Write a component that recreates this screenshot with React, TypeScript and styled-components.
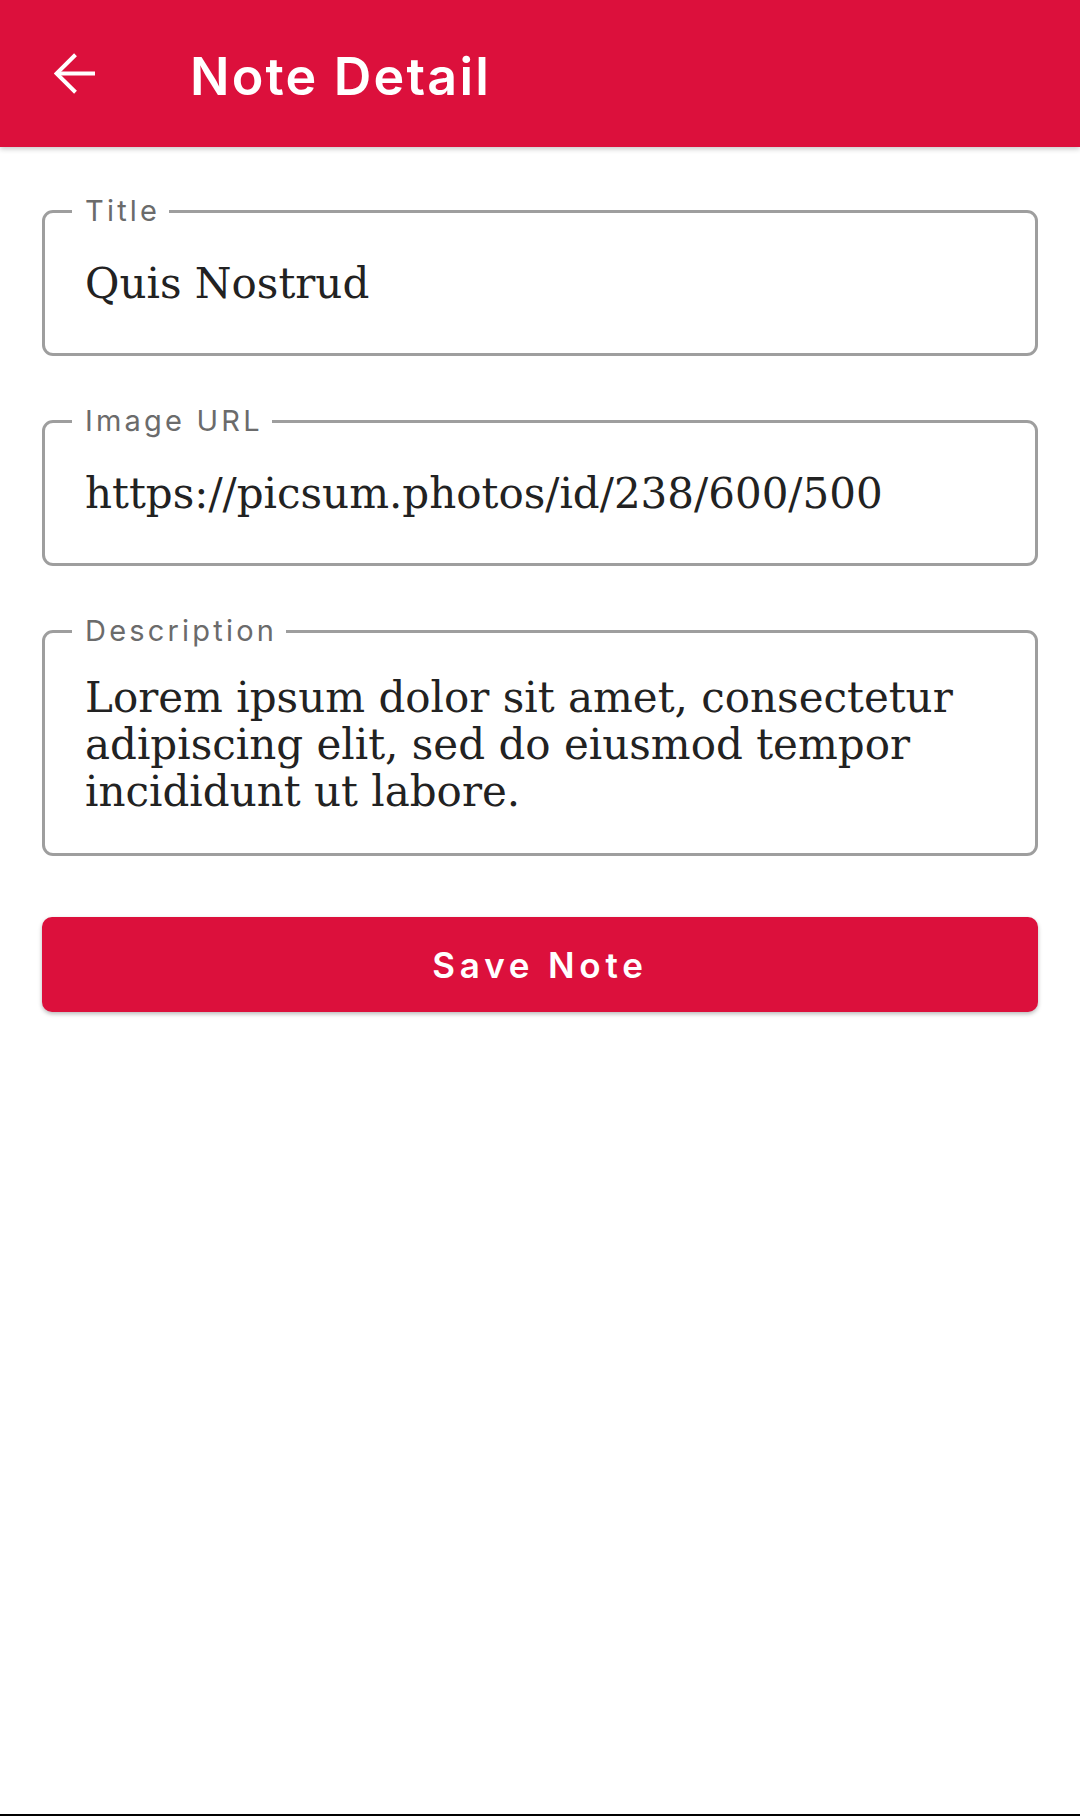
import React from "react";
import styled, { createGlobalStyle } from "styled-components";

const GlobalStyle = createGlobalStyle`
  html, body {
    margin: 0;
    padding: 0;
    background: #ffffff;
  }
  * { box-sizing: border-box; }
`;

const Screen = styled.div`
  height: 100vh;
  display: flex;
  flex-direction: column;
  border-bottom: 2px solid #000000;
  background: #ffffff;
`;

const AppBar = styled.header`
  position: relative;
  z-index: 1;
  height: 147px;
  flex: 0 0 auto;
  display: flex;
  align-items: center;
  padding-left: 54px;
  gap: 95px;
  background: #dc103c;
  box-shadow: 0 2px 5px rgba(0, 0, 0, 0.22);
`;

const BackButton = styled.button`
  width: 41px;
  height: 41px;
  padding: 0;
  border: none;
  background: transparent;
  display: flex;
  align-items: center;
  justify-content: center;
  cursor: pointer;
`;

const AppTitle = styled.h1`
  margin: 0;
  margin-top: 6px;
  font-family: Inter, "Noto Sans", sans-serif;
  font-weight: 600;
  font-size: 52px;
  color: #ffffff;
  letter-spacing: 2.2px;
`;

const Form = styled.main`
  display: flex;
  flex-direction: column;
  padding: 63px 42px 0 42px;
`;

const Fields = styled.div`
  display: flex;
  flex-direction: column;
  gap: 64px;
`;

const Field = styled.div<{ $multiline?: boolean }>`
  position: relative;
  height: ${(p) => (p.$multiline ? 226 : 146)}px;
  border: 3px solid #9e9e9e;
  border-radius: 11px;
  display: flex;
  align-items: ${(p) => (p.$multiline ? "flex-start" : "center")};
  padding: ${(p) => (p.$multiline ? "41px 40px 0 40px" : "0 40px 0 40px")};
`;

const FieldLabel = styled.span`
  position: absolute;
  top: -17px;
  left: 27px;
  padding: 0 9px 0 13px;
  background: #ffffff;
  font-family: Inter, "Noto Sans", sans-serif;
  font-size: 29px;
  line-height: 29px;
  color: #6b6b6b;
  letter-spacing: 3.2px;
`;

const FieldValue = styled.div<{ $multiline?: boolean }>`
  font-family: "DejaVu Serif", "Liberation Serif", serif;
  font-size: 42px;
  line-height: ${(p) => (p.$multiline ? "47px" : "normal")};
  color: #222222;
  white-space: ${(p) => (p.$multiline ? "normal" : "nowrap")};
`;

const SaveButton = styled.button`
  margin-top: 61px;
  height: 95px;
  width: 100%;
  border: none;
  border-radius: 10px;
  background: #dc103c;
  color: #ffffff;
  font-family: Inter, "Noto Sans", sans-serif;
  font-weight: 600;
  font-size: 35px;
  letter-spacing: 4.8px;
  box-shadow: 0 2px 4px rgba(0, 0, 0, 0.28);
  cursor: pointer;
`;

const ArrowBack = () => (
  <svg width="41" height="41" viewBox="0 0 41 41" fill="none">
    <polyline
      points="21.5,1.8 2.5,20.5 21.5,39.2"
      stroke="#ffffff"
      strokeWidth="4"
      fill="none"
    />
    <line x1="2.5" y1="20.5" x2="41" y2="20.5" stroke="#ffffff" strokeWidth="4" />
  </svg>
);

type FieldData = { label: string; value: string; multiline?: boolean };

const fields: FieldData[] = [
  { label: "Title", value: "Quis Nostrud" },
  { label: "Image URL", value: "https://picsum.photos/id/238/600/500" },
  {
    label: "Description",
    value:
      "Lorem ipsum dolor sit amet, consectetur adipiscing elit, sed do eiusmod tempor incididunt ut labore.",
    multiline: true,
  },
];

export default function App() {
  return (
    <>
      <GlobalStyle />
      <Screen>
        <AppBar>
          <BackButton aria-label="Back">
            <ArrowBack />
          </BackButton>
          <AppTitle>Note Detail</AppTitle>
        </AppBar>
        <Form>
          <Fields>
            {fields.map((f) => (
              <Field key={f.label} $multiline={f.multiline}>
                <FieldLabel>{f.label}</FieldLabel>
                <FieldValue $multiline={f.multiline}>{f.value}</FieldValue>
              </Field>
            ))}
          </Fields>
          <SaveButton>Save Note</SaveButton>
        </Form>
      </Screen>
    </>
  );
}
